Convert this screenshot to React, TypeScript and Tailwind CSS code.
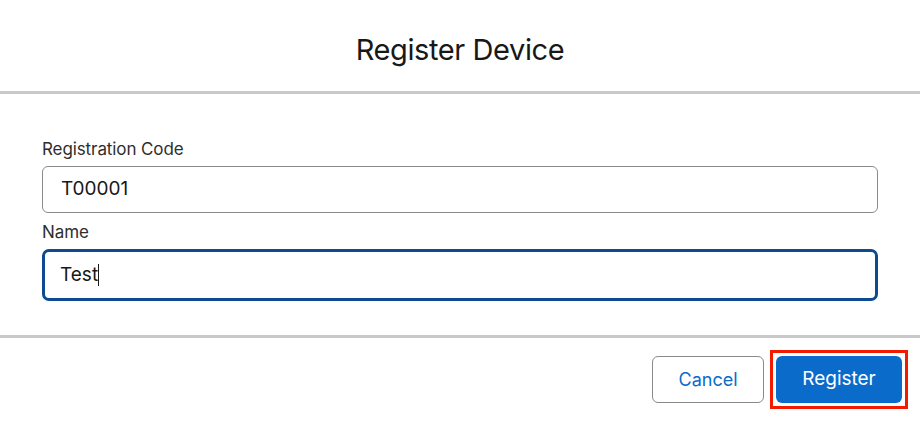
import React from "react";

function Field({ label, value, focused }: { label: string; value: string; focused?: boolean }) {
    return (
        <div className="flex flex-col">
            <label className="text-[17px] leading-[24px] text-[#2e2e2e] tracking-[-0.1px]">{label}</label>
            {focused ? (
                <div className="mt-[5px] h-[52px] border-[3px] border-[#0d4a8f] rounded-[7px] bg-white flex items-center pl-[15px] text-[19px] text-[#181818]">
                    {value}
                    <span className="inline-block w-[1px] h-[22px] bg-[#181818]" />
                </div>
            ) : (
                <div className="mt-[5px] h-[47px] border border-[#8a8a8a] rounded-[6px] bg-white flex items-center pl-[18px] text-[19px] text-[#181818]">
                    {value}
                </div>
            )}
        </div>
    )
}

export default function App() {
    return (
        <div className="w-[920px] h-[433px] bg-white flex flex-col font-['Inter',sans-serif]">
            <div className="h-[91px] flex items-center justify-center pt-[9px]">
                <h1 className="text-[29px] text-[#181818] tracking-[-0.4px]">Register Device</h1>
            </div>
            <div className="h-[3px] bg-[#c9c9c9]" />

            <div className="px-[42px] pt-[43px] pb-[34px] flex flex-col gap-[7px]">
                <Field label="Registration Code" value="T00001" />
                <Field label="Name" value="Test" focused />
            </div>
            <div className="h-[3px] bg-[#c9c9c9]" />

            <div className="flex justify-end items-center gap-[6px] pr-[12px] pt-[12px]">
                <button className="w-[112px] h-[47px] rounded-[6px] border border-[#8a8a8a] bg-white text-[18px] text-[#0b6bcb]">Cancel</button>
                <div className="border-[3px] border-[#f21b00] p-[3px]">
                    <button className="block w-[126px] h-[47px] rounded-[6px] bg-[#0b6bcb] text-[19px] text-white">Register</button>
                </div>
            </div>
        </div>
    )
}
